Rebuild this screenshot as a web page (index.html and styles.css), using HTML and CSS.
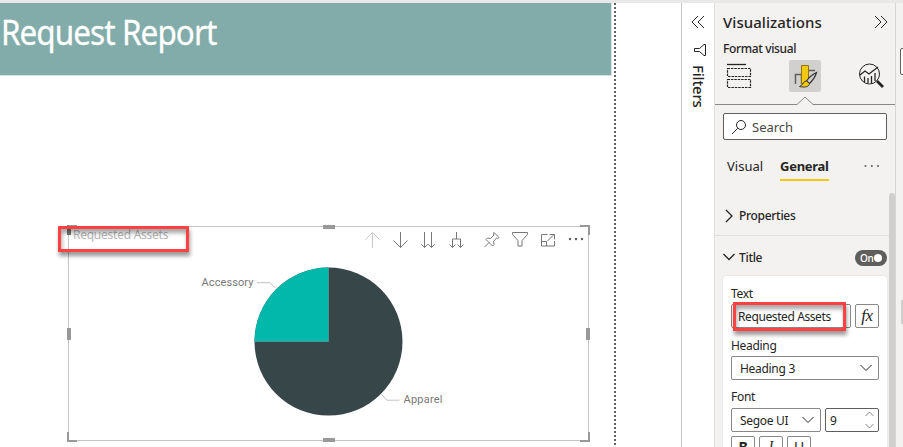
FILE: index.html
```
<!DOCTYPE html>
<html lang="en">
<head>
<meta charset="utf-8">
<title>Request Report</title>
<link rel="stylesheet" href="styles.css">
</head>
<body>
<div class="app">
  <main class="canvas">
    <div class="page">
      <header class="banner"><h1>Request Report</h1></header>
      <section class="visual">
        <div class="visual-head">
          <h3 class="visual-title">Requested Assets</h3>
          <div class="toolbar">
            <svg class="tool dim" viewBox="0 0 28 20"><path d="M14.5 18V2.5M7.5 9.5l7-7 7 7"/></svg>
            <svg class="tool" viewBox="0 0 28 20"><path d="M14.5 2v15.5M7.5 10.5l7 7 7-7"/></svg>
            <svg class="tool" viewBox="0 0 28 20"><path d="M10.5 2v15.5M7.2 14.2l3.3 3.3 3.3-3.3M17.5 2v15.5M14.2 14.2l3.3 3.3 3.3-3.3"/></svg>
            <svg class="tool" viewBox="0 0 28 20"><path d="M14.500 2v7M10.500 17.500v-8.500h8v8.500M7.500 14.500l3 3 3-3M15.500 14.500l3 3 3-3"/></svg>
            <svg class="tool pin" viewBox="0 0 28 20"><path d="M16 2.500l5 5-1.500 1-1-.5-3 3.500.5 3-1.500 1.500-6.500-6.500 1.500-1.500 3 .5 3.500-3.500-.5-1zM11 12.500l-4.500 4.500"/></svg>
            <svg class="tool" viewBox="0 0 28 20"><path d="M6.500 2.500h15v2l-5.500 6v5.500h-4v-5.500l-5.500-6z"/></svg>
            <svg class="tool" viewBox="0 0 28 20"><path d="M13.500 4.500h-6v11.500h13v-5M7.500 11.500h5v4.500M13.500 11l6.500-6.500M15.500 4.500h5v5"/></svg>
            <svg class="tool" viewBox="0 0 28 20"><g class="dots"><circle cx="8" cy="9" r="1.200"/><circle cx="14" cy="9" r="1.200"/><circle cx="20" cy="9" r="1.200"/></g></svg>
          </div>
        </div>
        <svg class="chart" viewBox="69 253 519 187">
          <circle class="slice" cx="328.500" cy="341.600" r="74" fill="#374649"/>
          <path class="slice" d="M328.500 341.500V267.600A74 74 0 0 0 254.500 341.500z" fill="#01b8aa"/>
          <path d="M328.500 267.800V341.500H254.500" fill="none" stroke="#5f9d98" stroke-width=".7"/>
          <path class="leader" d="M257 282.700h13l5 5M381.500 394.500l5.500 5.700h12.500"/>
          <text class="label" x="201.500" y="286" textLength="52">Accessory</text>
          <text class="label" x="403.500" y="403" textLength="39">Apparel</text>
        </svg>
        <i class="corner tl"></i><i class="corner tr"></i><i class="corner bl"></i><i class="corner br"></i>
        <i class="grip top"></i><i class="grip bottom"></i><i class="grip left"></i><i class="grip right"></i>
        <i class="callout callout-visual"></i>
      </section>
    </div>
  </main>
  <aside class="filters">
    <svg width="14" height="14" viewBox="0 0 14 14"><path d="M7 1L1 7l6 6M13 1L7 7l6 6"/></svg>
    <svg class="funnel" width="14" height="14" viewBox="0 0 14 14"><path d="M12.500 1.500v11h-1.500l-4.500-4h-5v-3h5l4.500-4z"/></svg>
    <span class="filters-label">Filters</span>
  </aside>
  <aside class="viz">
    <div class="viz-head">
      <h2>Visualizations</h2>
      <svg width="14" height="14" viewBox="0 0 14 14"><path d="M1 1l6 6-6 6M7 1l6 6-6 6"/></svg>
    </div>
    <p class="subtitle">Format visual</p>
    <div class="modes">
      <svg class="mode" viewBox="0 0 32 32"><path d="M4 4.500h19" stroke-width="1.300"/><path d="M4.500 8.500h23v8h-23zM4.500 19.500h23v8h-23z" stroke-width="1.200" stroke-dasharray="2.500 .9"/></svg>
      <svg class="mode active" viewBox="0 0 32 32"><path d="M6.500 24V14.500h6M19 10.500h7M12.500 24V14.500" stroke="#605e5c" stroke-width="1.500"/><path d="M12.500 5.500h7v18h-7z" fill="#f2c811" stroke="#927300"/><path d="M27.500 12.500c-4 2-8 5.500-10 8.500l3 2.500c3-3 6-7 7-11z" fill="#d2d0ce" stroke="#333" stroke-width="1.200"/><path d="M17.500 21c-3.500 0-3 4-7 5.500 5 1.200 9.500.5 10-3z" fill="#f2c811" stroke="#333"/></svg>
      <svg class="mode" viewBox="0 0 32 32"><circle cx="14.500" cy="14" r="10"/><path d="M5 15l5-4 4 3 9-7M9.500 22v-5.500M13 23v-5M16.500 23v-7M20 21v-8" stroke-width="1.300"/><path d="M22 21l6 6" stroke-width="2.800"/></svg>
    </div>
    <svg class="pointer" viewBox="0 0 180 9"><path d="M0 8.500h82l8-7.500 8 7.500h82"/></svg>
    <div class="search">
      <svg width="16" height="16" viewBox="0 0 16 16"><circle cx="10" cy="6" r="4.500"/><path d="M6.700 9.300L1 15"/></svg>
      <span>Search</span>
    </div>
    <nav class="tabs">
      <span class="tab">Visual</span><span class="tab selected">General</span>
      <svg width="16" height="4" viewBox="0 0 16 4"><g class="dots"><circle cx="1.500" cy="2" r="1"/><circle cx="7.800" cy="2" r="1"/><circle cx="14" cy="2" r="1"/></g></svg>
    </nav>
    <div class="scroll">
      <div class="group properties">
        <svg width="12" height="14" viewBox="0 0 12 14"><path d="M3 1l6 6-6 6"/></svg>
        <span>Properties</span>
      </div>
      <div class="group title-group">
        <svg width="12" height="14" viewBox="0 0 12 14"><path d="M.5 3l5.500 5.500L11.500 3"/></svg>
        <span>Title</span>
        <div class="toggle"><span>On</span><i></i></div>
      </div>
      <div class="card">
        <label>Text</label>
        <div class="row">
          <div class="field text-field"><span>Requested Assets</span><i class="callout callout-text"></i></div>
          <div class="field fx">fx</div>
        </div>
        <label class="heading-label">Heading</label>
        <div class="field select"><span>Heading 3</span><svg width="12" height="8" viewBox="0 0 12 8"><path d="M.5 1L6 6.500 11.500 1"/></svg></div>
        <label class="font-label">Font</label>
        <div class="row font-row">
          <div class="field select family"><span>Segoe UI</span><svg width="12" height="8" viewBox="0 0 12 8"><path d="M.5 1L6 6.500 11.500 1"/></svg></div>
          <div class="field select size"><span>9</span><svg width="9" height="18" viewBox="0 0 9 18"><path d="M.5 5l4-4 4 4M.5 13l4 4 4-4"/></svg></div>
        </div>
        <div class="row styles"><b class="field">B</b><i class="field">I</i><u class="field">U</u></div>
      </div>
      <i class="thumb"></i>
    </div>
  </aside>
  <aside class="edge"><i class="edge-box"></i><i class="edge-thumb"></i></aside>
</div>
</body>
</html>
```

FILE: styles.css
```
* { box-sizing: border-box; }
body { margin: 0; background: #fff; font-family: "Noto Sans", "Open Sans", sans-serif; color: #252423; }
h1, h2, h3, p { margin: 0; font-weight: 400; }
svg { display: block; flex: none; fill: none; stroke: #252423; stroke-width: 1; }
.dots { fill: #605e5c; stroke: none; }
.app { display: flex; width: 903px; height: 447px; border-top: 3px solid #e8e8e8; overflow: hidden; }

.canvas { width: 681px; flex: none; }
.page { width: 616px; height: 444px; background: repeating-linear-gradient(#606060 0 2px, #fff 2px 4px) 614px 0 / 2px 100% no-repeat; }
.banner { width: 612px; height: 73px; background: #81aca9; border-right: 1px solid #d5e4e3; border-bottom: 1px solid #d5e4e3; }
.banner h1 { padding: 5px 0 0 1px; font-size: 34px; line-height: 48px; color: #fff; white-space: nowrap; letter-spacing: -1px; -webkit-text-stroke: .3px #fff; transform: scaleX(.925); transform-origin: 0 0; }
.visual { position: relative; width: 521px; height: 215px; margin: 150px 0 0 68px; border: 1px solid #c4c4c4; }
.visual-head { display: flex; height: 26px; }
.visual-title { width: 289px; flex: none; padding-left: 4px; font-size: 12px; line-height: 16px; letter-spacing: -.25px; color: #b5b5b5; }
.toolbar { display: flex; flex: none; padding-top: 3px; }
.tool { width: 28px; height: 20px; stroke: #777; }
.tool.dim { stroke: #c8c8c8; }
.tool.pin { margin-left: 8px; }
.chart { width: 519px; height: 187px; }
.slice { stroke: none; }
.label { font: 11px Roboto, sans-serif; fill: #777; stroke: none; }
.leader { stroke: #c0c0c0; }
.corner { position: absolute; width: 10px; height: 10px; border: 0 solid #999; }
.tl { left: -2px; top: -2px; border-width: 2px 0 0 4px; border-left-color: #777; }
.tr { right: -2px; top: -2px; border-width: 2px 2px 0 0; }
.bl { left: -2px; bottom: -2px; border-width: 0 0 2px 2px; }
.br { right: -2px; bottom: -2px; border-width: 0 2px 2px 0; }
.grip { position: absolute; background: #999; }
.grip.top, .grip.bottom { width: 12px; height: 4px; left: 254px; }
.grip.left, .grip.right { width: 4px; height: 12px; top: 101px; }
.grip.top { top: -2px; } .grip.bottom { bottom: -2px; }
.grip.left { left: -2px; } .grip.right { right: -2px; }
.callout { position: absolute; border: 3px solid #ff4141; box-shadow: 1px 4px 4px rgba(0,0,0,.4), inset 1px 4px 4px rgba(0,0,0,.35); }
.callout-visual { left: -11px; top: -1px; width: 131px; height: 26px; }

.filters { display: flex; flex-direction: column; align-items: center; width: 34px; flex: none; padding-top: 12px; border-left: 1px solid #c8c6c4; border-right: 1px solid #e1dfdd; }
.funnel { margin: 14px 0 0 3px; }
.filters-label { writing-mode: vertical-rl; font-size: 15px; line-height: 20px; margin: 8px 0 0 2px; font-weight: 500; letter-spacing: -.2px; }

.viz { width: 180px; flex: none; background: #f3f2f1; }
.viz-head { display: flex; justify-content: space-between; align-items: center; height: 22px; margin-top: 8px; padding: 0 7px 0 8px; }
.viz-head h2 { font-size: 15px; font-weight: 500; letter-spacing: .05px; }
.subtitle { margin: 7px 0 0 8px; font-size: 12px; line-height: 18px; font-weight: 500; letter-spacing: -.35px; }
.modes { display: flex; justify-content: space-between; padding: 0 8px; margin-top: 2px; }
.mode { width: 32px; height: 32px; }
.mode.active { background: #d2d0ce; border-radius: 2px; }
.pointer { width: 180px; height: 9px; margin-top: 4px; stroke: #8a8886; }
.search { display: flex; align-items: center; gap: 5px; width: 164px; height: 27px; margin: 8px 0 0 8px; padding-left: 7px; background: #fff; border: 1px solid #605e5c; border-radius: 2px; font-size: 13px; color: #484644; }
.tabs { display: flex; align-items: center; margin: 17px 15px 0 12px; height: 24px; font-size: 13px; }
.tab { height: 24px; line-height: 18px; }
.tab.selected { margin-left: 17px; font-weight: 700; letter-spacing: -.3px; border-bottom: 2px solid #f2c811; }
.tabs svg { margin: 0 0 6px auto; }
.scroll { position: relative; height: 270px; overflow: hidden; }
.group { display: flex; align-items: center; gap: 4px; padding-left: 8px; font-size: 12px; font-weight: 500; letter-spacing: -.3px; }
.group > svg { stroke-width: 1.300; }
.properties { height: 55px; padding-top: 15px; border-bottom: 1px solid #e1dfdd; }
.title-group { height: 40px; padding-top: 3px; padding-right: 8px; }
.toggle { display: flex; align-items: center; justify-content: space-between; width: 32px; height: 16px; margin-left: auto; padding: 0 5px; border-radius: 8px; background: #605e5c; color: #fff; font-size: 10px; }
.toggle i { width: 8px; height: 8px; border-radius: 50%; background: #fff; }
.card { width: 164px; height: 180px; margin-left: 8px; padding: 9px 8px 0; background: #fff; border-radius: 4px 4px 0 0; font-size: 12px; letter-spacing: -.3px; box-shadow: 0 0 3px rgba(0,0,0,.08); }
.card label { display: block; height: 17px; line-height: 18px; }
.row { display: flex; gap: 4px; }
.field { display: flex; align-items: center; height: 24px; background: #fff; border: 1px solid #8a8886; border-radius: 2px; }
.text-field { position: relative; width: 120px; padding-left: 6px; margin-top: 2px; white-space: nowrap; letter-spacing: -.4px; }
.fx { width: 24px; margin-top: 2px; justify-content: center; font: italic 17px "Liberation Serif", serif; }
.callout-text { left: 1px; top: -3px; width: 113px; height: 29px; }
.card .heading-label { margin: 9px 0 2px; }
.select { justify-content: space-between; padding: 0 6px 0 8px; }
.card .font-label { margin: 8px 0 3px; }
.family { width: 90px; }
.size { width: 54px; padding: 0 4px; border-color: #605e5c; }
.size svg { stroke: #8a8886; }
.styles { margin-top: 4px; }
.styles .field { width: 24px; justify-content: center; font-size: 14px; line-height: 16px; padding-bottom: 3px; }
.styles i { font-family: "Liberation Serif", serif; font-size: 17px; }
.thumb { position: absolute; right: 0; top: 12px; width: 6px; height: 266px; border-radius: 3px; background: #d0cfce; }

.edge { position: relative; flex: 1; background: #f3f2f1; border-left: 1px solid #d8d6d4; overflow: hidden; }
.edge-box { position: absolute; left: 4px; top: 45px; width: 20px; height: 27px; border: 1px solid #605e5c; border-radius: 2px; background: #fff; }
.edge-thumb { position: absolute; left: 5px; top: 297px; width: 6px; height: 24px; background: #d0cfce; }
```
